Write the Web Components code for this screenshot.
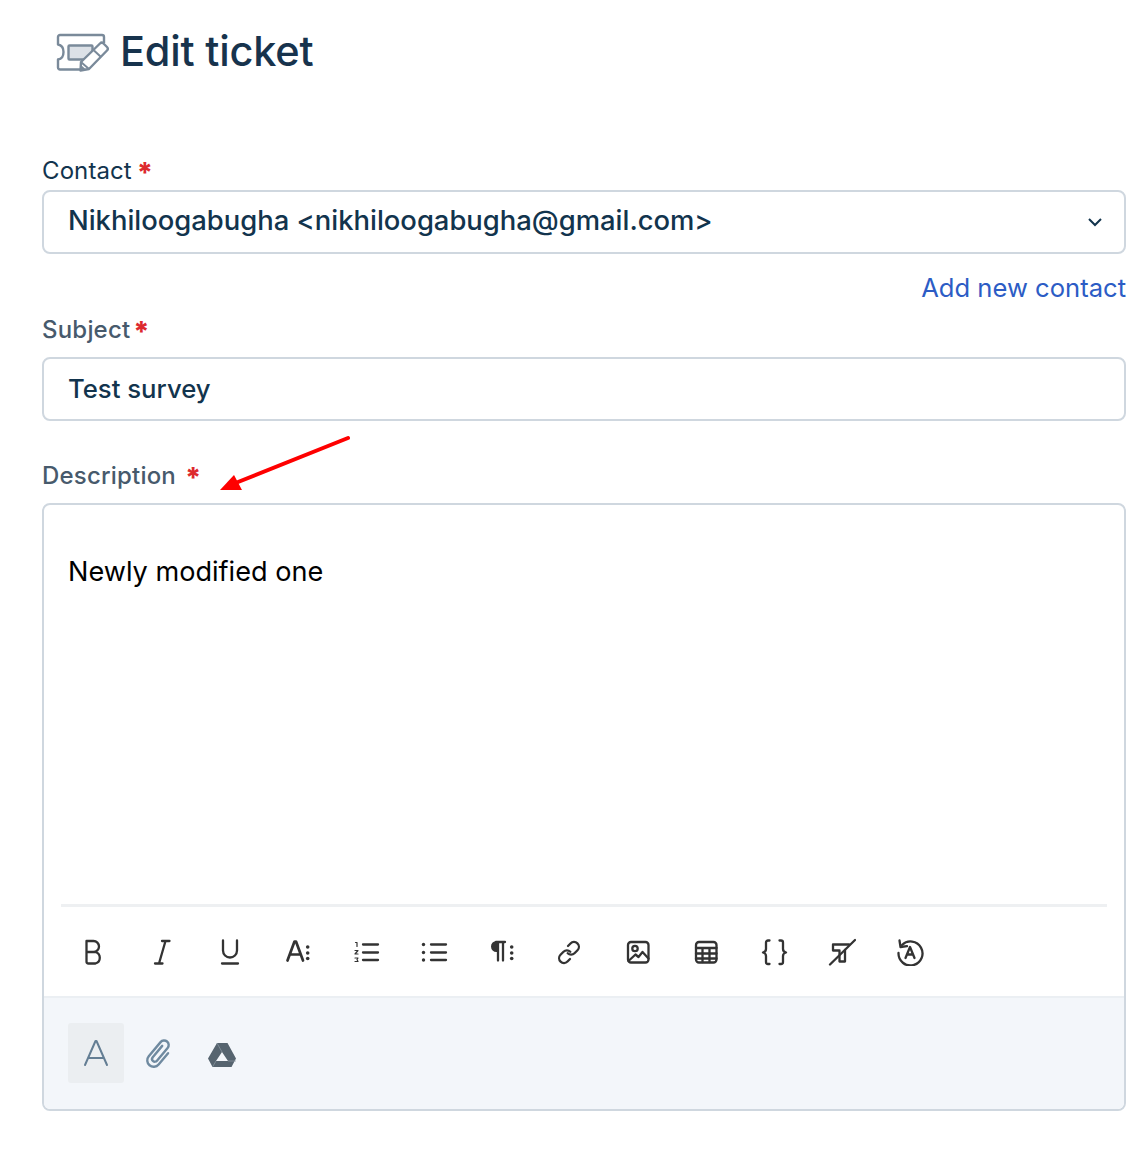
<!DOCTYPE html>
<html>
<head>
<meta charset="utf-8">
<title>Edit ticket</title>
<style>
    html, body { margin: 0; background: #fff; }
    body { font-family: Inter, "Noto Sans", sans-serif; color: #12344d; }
</style>
</head>
<body>
<edit-ticket-page>
    <ticket-header title="Edit ticket"></ticket-header>
    <form-field label="Contact" gap="6" star-gap="5" style="margin-top:56px;--label-color:#12344d;--label-weight:400;--label-spacing:.1px">
        <text-box value="Nikhiloogabugha &lt;nikhiloogabugha@gmail.com&gt;" size="27.4" lift="4" chevron></text-box>
    </form-field>
    <add-link>Add new contact</add-link>
    <form-field label="Subject" gap="14" star-gap="3" style="margin-top:13px">
        <text-box value="Test survey" size="25.7" lift="2"></text-box>
    </form-field>
    <form-field label="Description" gap="14" star-gap="9" style="margin-top:42px">
        <rich-editor>Newly modified one</rich-editor>
    </form-field>
</edit-ticket-page>

<script>
class EditTicketPage extends HTMLElement {
    constructor() {
        super();
        this.attachShadow({ mode: "open" });
        this.shadowRoot.innerHTML = `
            <style>
                :host {
                    display: block;
                    position: relative;
                    height: 1152px;
                    box-sizing: border-box;
                    padding: 0 16px 0 42px;
                    overflow: hidden;
                }
                .arrow {
                    position: absolute;
                    left: 215px;
                    top: 430px;
                }
            </style>
            <slot></slot>
            <svg class="arrow" width="140" height="66" viewBox="0 0 140 66">
                <line x1="133" y1="8" x2="18" y2="54" stroke="#fe0000" stroke-width="4" stroke-linecap="round"/>
                <polygon points="5,60 19,45 27,60" fill="#fe0000"/>
            </svg>
        `;
    }
}

class TicketHeader extends HTMLElement {
    constructor() {
        super();
        this.attachShadow({ mode: "open" });
        this.shadowRoot.innerHTML = `
            <style>
                :host {
                    display: flex;
                    align-items: center;
                    gap: 11px;
                    height: 102px;
                    padding-left: 14px;
                    box-sizing: border-box;
                }
                svg { flex: none; margin-top: 4px; }
                h1 {
                    margin: 0;
                    font-size: 41.5px;
                    font-weight: 500;
                    letter-spacing: -0.2px;
                    color: #17334d;
                }
            </style>
            <svg width="53" height="42" viewBox="0 0 53 42" fill="none">
                <path d="M26 37.500H4a2 2 0 0 1-2-2v-8c3.500-.5 5.500-3.500 5.500-7.500S5.500 13 2 12.500V5a2 2 0 0 1 2-2h42a2 2 0 0 1 2 2v6" stroke="#7a8a9a" stroke-width="2.400" stroke-linejoin="round"/>
                <rect x="12.500" y="13.500" width="24" height="14" rx="1" fill="#dce1e7" stroke="#7a8a9a" stroke-width="2.400"/>
                <path d="M25 30 44 11.500a2.500 2.500 0 0 1 3.500 0l3.500 3.500a2.500 2.500 0 0 1 0 3.500L33 37l-8.500 1.500z" fill="#fff" stroke="#7a8a9a" stroke-width="2.400" stroke-linejoin="round"/>
                <path d="M25.500 30.500 33 37M38 18.500l7 6.500" stroke="#7a8a9a" stroke-width="2"/>
                <path d="M24 39l1-6 5 4.500z" fill="#7a8a9a"/>
            </svg>
            <h1></h1>
        `;
    }

    connectedCallback() {
        this.shadowRoot.querySelector("h1").textContent = this.getAttribute("title");
    }
}

class FormField extends HTMLElement {
    constructor() {
        super();
        this.attachShadow({ mode: "open" });
        this.shadowRoot.innerHTML = `
            <style>
                :host { display: block; }
                label {
                    display: block;
                    font-size: 24px;
                    letter-spacing: var(--label-spacing, 0.2px);
                    line-height: 26px;
                    font-weight: var(--label-weight, 500);
                    color: var(--label-color, #475a6c);
                }
                .req {
                    color: #dd2a2e;
                    font-size: 28px;
                    line-height: 0;
                    letter-spacing: 0;
                    font-weight: 800;
                    vertical-align: -4px;
                }
            </style>
            <label><span class="txt"></span><span class="req">*</span></label>
            <slot></slot>
        `;
    }

    connectedCallback() {
        this.shadowRoot.querySelector(".txt").textContent = this.getAttribute("label");
        this.shadowRoot.querySelector(".req").style.marginLeft = this.getAttribute("star-gap") + "px";
        this.shadowRoot.querySelector("label").style.marginBottom = this.getAttribute("gap") + "px";
    }
}

class TextBox extends HTMLElement {
    constructor() {
        super();
        this.attachShadow({ mode: "open" });
        this.shadowRoot.innerHTML = `
            <style>
                :host {
                    display: flex;
                    align-items: center;
                    justify-content: space-between;
                    height: 64px;
                    box-sizing: border-box;
                    padding: 0 21px 0 24px;
                    border: 2px solid #cfd7df;
                    border-radius: 8px;
                    background: #fff;
                    font-weight: 500;
                    color: #12344d;
                }
                svg { display: none; }
                :host([chevron]) svg { display: block; }
            </style>
            <span class="val"></span>
            <svg width="16" height="12" viewBox="0 0 16 12" fill="none">
                <path d="M2 3l6 6 6-6" stroke="#12344d" stroke-width="2"/>
            </svg>
        `;
    }

    connectedCallback() {
        const val = this.shadowRoot.querySelector(".val");
        val.textContent = this.getAttribute("value");
        val.style.fontSize = this.getAttribute("size") + "px";
        val.style.marginBottom = this.getAttribute("lift") + "px";
    }
}

class AddLink extends HTMLElement {
    constructor() {
        super();
        this.attachShadow({ mode: "open" });
        this.shadowRoot.innerHTML = `
            <style>
                :host {
                    display: block;
                    margin-top: 18px;
                    text-align: right;
                    font-size: 25.6px;
                    line-height: 32px;
                    color: #2c5cc5;
                }
            </style>
            <slot></slot>
        `;
    }
}

// each icon sits in a 28x28 box, 68px apart
const TOOL_ICONS = [
    `<path d="M6.500 3h7a5.500 5.500 0 0 1 0 11h-7zM6.500 14h9a6 6 0 0 1 0 11.500h-7a2 2 0 0 1-2-2z"/>`,
    `<path d="M14 3h7.500M7 25.500h7.500M17.500 3 11 25.500"/>`,
    `<path d="M7 2.500v10a7 7 0 0 0 14 0v-10M6 25.500h16"/>`,
    `<path class="heavy" d="M3.500 22.500 10.500 3.500h1.500l7 19M6 16.500h10.500"/><g class="solid"><circle cx="23.700" cy="9" r="1.800"/><circle cx="23.700" cy="15" r="1.800"/><circle cx="23.700" cy="20.500" r="1.800"/></g>`,
    `<path d="M11 6.500h15M11 14.500h15M11 22h15"/><path class="thin" d="M3.500 4.500h1.500v4M3 12.500h3l-3 3.500h3M3 20h3l-1 1.500 1 2H3"/>`,
    `<path d="M11 6.500h15M11 14.500h15M11 22h15"/><g class="solid"><circle cx="3.500" cy="6.500" r="1.700"/><circle cx="3.500" cy="14.500" r="1.700"/><circle cx="3.500" cy="22" r="1.700"/></g>`,
    `<path d="M10 4v18.500M15 4v18.500M8 4h9"/><path class="solid" d="M10 3v11H8.500a5.500 5.500 0 0 1 0-11z"/><g class="solid"><circle cx="23.700" cy="9" r="1.800"/><circle cx="23.700" cy="15" r="1.800"/><circle cx="23.700" cy="20.500" r="1.800"/></g>`,
    `<path d="M12 8l2.500-2.500a4.800 4.800 0 0 1 7 6.800l-3 3a4.800 4.800 0 0 1-6.800 0M14 21l-2.500 2.500a4.800 4.800 0 0 1-7-6.800l3-3a4.800 4.800 0 0 1 6.800 0"/>`,
    `<rect x="4" y="4" width="20.500" height="20.500" rx="3"/><circle cx="11" cy="10.500" r="2.700"/><path d="M4.500 23 11.500 16.500l3 2.500 4-5 6 6.500"/>`,
    `<rect x="4" y="4" width="20.500" height="20.500" rx="3"/><path d="M4 10h20.500M4 15.500h20.500M4 20.500h20.500M10.500 10v14M17.500 10v14"/>`,
    `<path d="M9.500 2.500H8a2 2 0 0 0-2 2V11c0 2-1 3-3 3.500 2 .5 3 1.500 3 3.500v6a2 2 0 0 0 2 2h1.500M19.500 2.500H21a2 2 0 0 1 2 2V11c0 2 1 3 3 3.500-2 .5-3 1.500-3 3.500v6a2 2 0 0 1-2 2h-1.500"/>`,
    `<path d="M21 6.500H5v6h6.500v11h5.500V12"/><path d="M27 2 2 26.500"/>`,
    `<path d="M6 7a12 12 0 1 1-3.500 8"/><path d="M3.500 2.500l1 6.500 6.500-.8"/><path d="M9.500 20l4.500-11 4.500 11M11 16.500h6"/>`
];

class RichEditor extends HTMLElement {
    constructor() {
        super();
        this.attachShadow({ mode: "open" });
        this.shadowRoot.innerHTML = `
            <style>
                :host {
                    display: block;
                    height: 608px;
                    box-sizing: border-box;
                    border: 2px solid #cfd7df;
                    border-radius: 8px;
                    overflow: hidden;
                    background: #fff;
                }
                .body {
                    height: 399px;
                    box-sizing: border-box;
                    padding: 50px 24px 0;
                    font-size: 27.1px;
                    line-height: 34px;
                    color: #000;
                }
                .rule {
                    height: 3px;
                    margin: 0 17px;
                    background: #eef0f2;
                }
                .tools {
                    display: flex;
                    align-items: center;
                    height: 91px;
                    box-sizing: border-box;
                    padding-left: 36px;
                    gap: 40px;
                    border-bottom: 2px solid #ebeff3;
                }
                .tools svg {
                    width: 28px;
                    height: 28px;
                    fill: none;
                    stroke: #333;
                    stroke-width: 2.3;
                    stroke-linecap: round;
                    stroke-linejoin: round;
                    flex: none;
                }
                .tools .solid { fill: #333; stroke: none; }
                .tools .thin { stroke-width: 1.2; }
                .tools .heavy { stroke-width: 2.7; }
                .foot {
                    display: flex;
                    align-items: center;
                    height: 111px;
                    box-sizing: border-box;
                    padding: 0 0 1px 24px;
                    background: #f3f6fa;
                }
                .fmt {
                    display: flex;
                    align-items: center;
                    justify-content: center;
                    width: 56px;
                    height: 60px;
                    border-radius: 3px;
                    background: #ebeef1;
                }
                .clip { margin-left: 21px; margin-top: 2px; }
                .drive { margin-left: 35px; margin-top: 3px; }
            </style>
            <div class="body"><slot></slot></div>
            <div class="rule"></div>
            <div class="tools"></div>
            <div class="foot">
                <div class="fmt">
                    <svg width="26" height="28" viewBox="0 0 26 28" fill="none">
                        <path d="M2 26 12.500 2h1L24 26M6 19h14" stroke="#647e94" stroke-width="2" stroke-linecap="round" stroke-linejoin="round"/>
                    </svg>
                </div>
                <svg class="clip" width="28" height="30" viewBox="0 0 28 30" fill="none">
                    <g transform="translate(14 15) rotate(40) scale(.92) translate(-8 -17)">
                        <path d="M5 8V24a3 3 0 0 0 6 0V6a5 5 0 0 0-10 0V26a7 7 0 0 0 14 0V10" stroke="#6f8aa0" stroke-width="2.600" stroke-linecap="round"/>
                    </g>
                </svg>
                <svg class="drive" width="28" height="24" viewBox="0 0 28 24">
                    <path fill-rule="evenodd" d="M9 0h10.500l8.500 15.500L23.500 24h-19L0 15.500zM14 9 8 18h12z" fill="#56646f"/>
                    <path d="M8 18 4.500 24M9 0l5 9M20 18h8" stroke="#8d99a3" stroke-width=".7" fill="none"/>
                </svg>
            </div>
        `;
        const tools = this.shadowRoot.querySelector(".tools");
        tools.innerHTML = TOOL_ICONS.map(d => `<svg viewBox="0 0 28 28">${d}</svg>`).join("");
    }
}

customElements.define("edit-ticket-page", EditTicketPage);
customElements.define("ticket-header", TicketHeader);
customElements.define("form-field", FormField);
customElements.define("text-box", TextBox);
customElements.define("add-link", AddLink);
customElements.define("rich-editor", RichEditor);
</script>
</body>
</html>
